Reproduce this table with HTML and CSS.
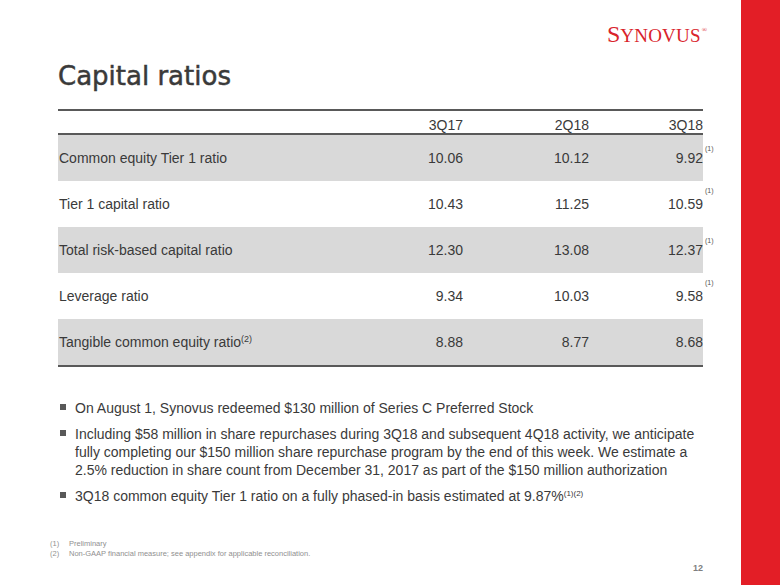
FILE: index.html
```html
<!DOCTYPE html>
<html lang="en">
<head>
<meta charset="utf-8">
<title>Capital ratios</title>
<link rel="stylesheet" href="styles.css">
</head>
<body>
<div class="slide">
  <main class="content">
    <header class="logo-row">
      <div class="logo"><span class="logo-cap">S</span><span class="logo-sc">YNOVUS</span><span class="logo-reg">®</span></div>
    </header>

    <h1 class="title">Capital ratios</h1>

    <section class="table">
      <div class="row head">
        <div></div>
        <div class="num">3Q17</div>
        <div class="num">2Q18</div>
        <div class="num">3Q18</div>
      </div>
      <div class="row shade">
        <div class="label">Common equity Tier 1 ratio</div>
        <div class="num">10.06</div>
        <div class="num">10.12</div>
        <div class="num last">9.92<span class="note">(1)</span></div>
      </div>
      <div class="row">
        <div class="label">Tier 1 capital ratio</div>
        <div class="num">10.43</div>
        <div class="num">11.25</div>
        <div class="num last">10.59<span class="note high">(1)</span></div>
      </div>
      <div class="row shade">
        <div class="label">Total risk-based capital ratio</div>
        <div class="num">12.30</div>
        <div class="num">13.08</div>
        <div class="num last">12.37<span class="note">(1)</span></div>
      </div>
      <div class="row">
        <div class="label">Leverage ratio</div>
        <div class="num">9.34</div>
        <div class="num">10.03</div>
        <div class="num last">9.58<span class="note high">(1)</span></div>
      </div>
      <div class="row shade">
        <div class="label">Tangible common equity ratio<sup class="lsup">(2)</sup></div>
        <div class="num">8.88</div>
        <div class="num">8.77</div>
        <div class="num">8.68</div>
      </div>
    </section>

    <ul class="bullets">
      <li><span>On August 1, Synovus redeemed $130 million of Series C Preferred Stock</span></li>
      <li><span>Including $58 million in share repurchases during 3Q18 and subsequent 4Q18 activity, we anticipate fully completing our $150 million share repurchase program by the end of this week. We estimate a 2.5% reduction in share count from December 31, 2017 as part of the $150 million authorization</span></li>
      <li><span>3Q18 common equity Tier 1 ratio on a fully phased-in basis estimated at 9.87%<sup class="bsup">(1)(2)</sup></span></li>
    </ul>

    <ol class="footnotes">
      <li><span class="fn-num">(1)</span><span>Preliminary</span></li>
      <li><span class="fn-num">(2)</span><span>Non-GAAP financial measure; see appendix for applicable reconciliation.</span></li>
    </ol>

    <footer class="page-num">12</footer>
  </main>
  <aside class="redbar"></aside>
</div>
</body>
</html>
```

FILE: styles.css
```css
* { box-sizing: border-box; }

html, body {
  margin: 0;
  padding: 0;
  background: #ffffff;
}

body {
  font-family: "Liberation Sans", Arial, sans-serif;
  color: #3a3a3a;
}

.slide {
  width: 780px;
  height: 585px;
  display: flex;
  overflow: hidden;
}

.content {
  width: 741px;
  padding: 18px 38px 0 58px;
  display: flex;
  flex-direction: column;
}

.redbar {
  width: 39px;
  background: #e31e26;
}

/* Logo */
.logo-row {
  display: flex;
  justify-content: flex-end;
  margin-right: -4px;
}

.logo {
  font-family: "Liberation Serif", "Times New Roman", serif;
  color: #d9232b;
  line-height: 24px;
  height: 24px;
  white-space: nowrap;
}

.logo-cap {
  font-size: 24px;
}

.logo-sc {
  font-size: 19px;
  letter-spacing: 0.2px;
}

.logo-reg {
  font-size: 7px;
  vertical-align: 10px;
  margin-left: 1px;
}

/* Title */
.title {
  margin: 19px 0 0 0;
  font-family: "DejaVu Sans", sans-serif;
  font-weight: normal;
  font-size: 26px;
  line-height: 30px;
  color: #3a3a3a;
  -webkit-text-stroke: 0.5px #3a3a3a;
}

/* Table */
.table {
  margin-top: 18px;
  width: 645px;
  border-top: 2px solid #595959;
  border-bottom: 2px solid #595959;
  font-size: 14px;
}

.row {
  display: grid;
  grid-template-columns: 279px 126px 126px 114px;
  align-items: center;
  height: 46px;
}

.row.head {
  height: 24px;
  align-items: end;
  line-height: 14px;
  padding-bottom: 1px;
  border-bottom: 2px solid #595959;
}

.row.shade {
  background: #d9d9d9;
}

.label {
  padding-left: 1px;
}

.num {
  text-align: right;
}

.num.last {
  position: relative;
}

.note {
  position: absolute;
  left: 100%;
  top: -5px;
  margin-left: 2px;
  font-size: 7px;
  line-height: 8px;
  color: #555;
}

.note.high {
  top: -9px;
}

.lsup {
  font-size: 9px;
  vertical-align: 5px;
  line-height: 0;
}

/* Bullets */
.bullets {
  list-style: none;
  margin: 32px 0 0 0;
  padding: 0;
  font-size: 14px;
  line-height: 18px;
  width: 645px;
}

.bullets li {
  display: flex;
  margin-bottom: 8px;
}

.bullets li::before {
  content: "";
  flex: 0 0 6px;
  width: 6px;
  height: 6px;
  margin: 5px 9px 0 2px;
  background: #595959;
}

.bsup {
  font-size: 8px;
  vertical-align: 5px;
  line-height: 0;
}

/* Footnotes */
.footnotes {
  list-style: none;
  margin: 26px 0 0 -8px;
  padding: 0;
  font-size: 7.5px;
  line-height: 10px;
  color: #909090;
}

.footnotes li {
  display: flex;
}

.fn-num {
  width: 19px;
}

/* Page number */
.page-num {
  align-self: flex-end;
  margin-top: 3px;
  font-size: 9px;
  font-weight: bold;
  line-height: 12px;
  color: #808080;
}
```
